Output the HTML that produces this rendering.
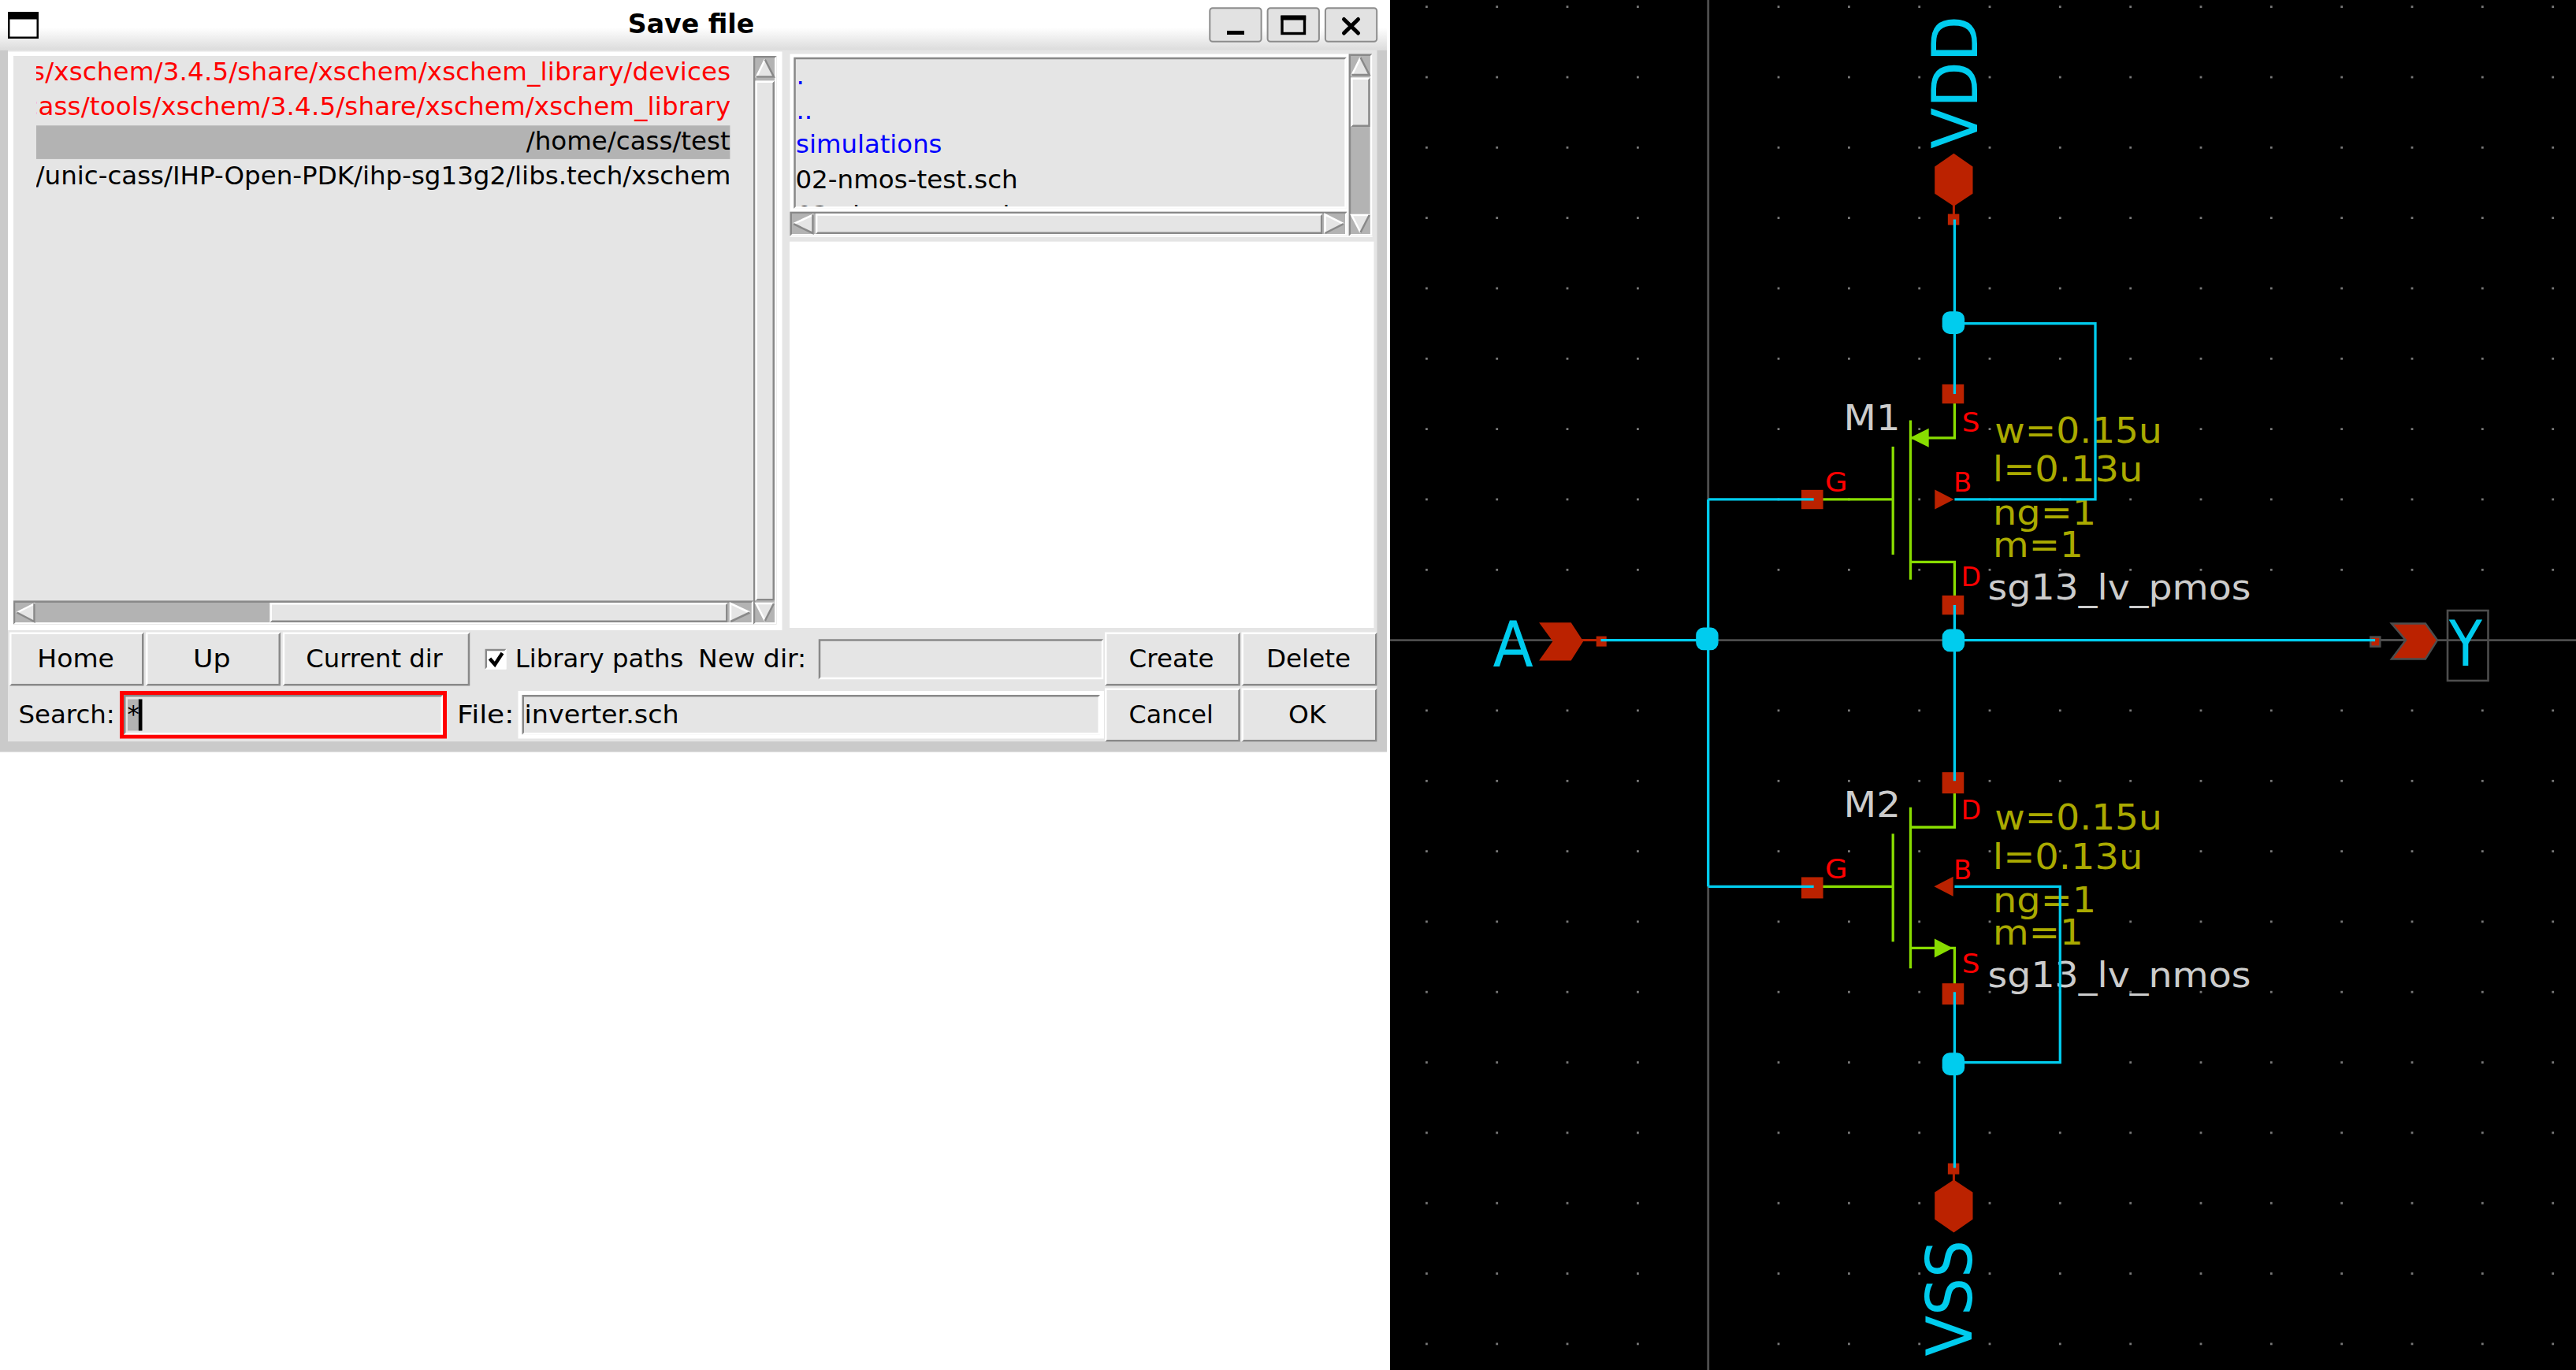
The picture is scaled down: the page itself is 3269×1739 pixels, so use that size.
<!DOCTYPE html>
<html><head><meta charset="utf-8"><title>Save file</title>
<style>
html,body{margin:0;padding:0;background:#fff;}
body{width:3269px;height:1739px;overflow:hidden;}
svg{display:block;font-family:"DejaVu Sans","Liberation Sans",sans-serif;}
</style></head><body>
<svg width="3269" height="1739" viewBox="0 0 3269 1739">
<defs>
<linearGradient id="tb" x1="0" y1="0" x2="0" y2="1"><stop offset="0" stop-color="#fff"/><stop offset="0.55" stop-color="#fff"/><stop offset="1" stop-color="#dcdcdc"/></linearGradient>
<clipPath id="cl1"><rect x="46" y="71" width="880.5" height="691"/></clipPath>
<clipPath id="cl2"><rect x="1009.5" y="76" width="696" height="186"/></clipPath>
</defs>
<g>
<rect x="-30" y="-30" width="3329" height="1799" fill="#fff"/>

<rect x="1764.00" y="-30.00" width="1535.00" height="1799.00" fill="#000" />
<g fill="#787878">
<rect x="1809.0" y="7.2" width="2.8" height="2.8"/>
<rect x="1809.0" y="96.6" width="2.8" height="2.8"/>
<rect x="1809.0" y="185.9" width="2.8" height="2.8"/>
<rect x="1809.0" y="275.2" width="2.8" height="2.8"/>
<rect x="1809.0" y="364.6" width="2.8" height="2.8"/>
<rect x="1809.0" y="453.9" width="2.8" height="2.8"/>
<rect x="1809.0" y="543.2" width="2.8" height="2.8"/>
<rect x="1809.0" y="632.5" width="2.8" height="2.8"/>
<rect x="1809.0" y="721.9" width="2.8" height="2.8"/>
<rect x="1809.0" y="900.5" width="2.8" height="2.8"/>
<rect x="1809.0" y="989.9" width="2.8" height="2.8"/>
<rect x="1809.0" y="1079.2" width="2.8" height="2.8"/>
<rect x="1809.0" y="1168.5" width="2.8" height="2.8"/>
<rect x="1809.0" y="1257.8" width="2.8" height="2.8"/>
<rect x="1809.0" y="1347.2" width="2.8" height="2.8"/>
<rect x="1809.0" y="1436.5" width="2.8" height="2.8"/>
<rect x="1809.0" y="1525.8" width="2.8" height="2.8"/>
<rect x="1809.0" y="1615.2" width="2.8" height="2.8"/>
<rect x="1809.0" y="1704.5" width="2.8" height="2.8"/>
<rect x="1898.3" y="7.2" width="2.8" height="2.8"/>
<rect x="1898.3" y="96.6" width="2.8" height="2.8"/>
<rect x="1898.3" y="185.9" width="2.8" height="2.8"/>
<rect x="1898.3" y="275.2" width="2.8" height="2.8"/>
<rect x="1898.3" y="364.6" width="2.8" height="2.8"/>
<rect x="1898.3" y="453.9" width="2.8" height="2.8"/>
<rect x="1898.3" y="543.2" width="2.8" height="2.8"/>
<rect x="1898.3" y="632.5" width="2.8" height="2.8"/>
<rect x="1898.3" y="721.9" width="2.8" height="2.8"/>
<rect x="1898.3" y="900.5" width="2.8" height="2.8"/>
<rect x="1898.3" y="989.9" width="2.8" height="2.8"/>
<rect x="1898.3" y="1079.2" width="2.8" height="2.8"/>
<rect x="1898.3" y="1168.5" width="2.8" height="2.8"/>
<rect x="1898.3" y="1257.8" width="2.8" height="2.8"/>
<rect x="1898.3" y="1347.2" width="2.8" height="2.8"/>
<rect x="1898.3" y="1436.5" width="2.8" height="2.8"/>
<rect x="1898.3" y="1525.8" width="2.8" height="2.8"/>
<rect x="1898.3" y="1615.2" width="2.8" height="2.8"/>
<rect x="1898.3" y="1704.5" width="2.8" height="2.8"/>
<rect x="1987.6" y="7.2" width="2.8" height="2.8"/>
<rect x="1987.6" y="96.6" width="2.8" height="2.8"/>
<rect x="1987.6" y="185.9" width="2.8" height="2.8"/>
<rect x="1987.6" y="275.2" width="2.8" height="2.8"/>
<rect x="1987.6" y="364.6" width="2.8" height="2.8"/>
<rect x="1987.6" y="453.9" width="2.8" height="2.8"/>
<rect x="1987.6" y="543.2" width="2.8" height="2.8"/>
<rect x="1987.6" y="632.5" width="2.8" height="2.8"/>
<rect x="1987.6" y="721.9" width="2.8" height="2.8"/>
<rect x="1987.6" y="900.5" width="2.8" height="2.8"/>
<rect x="1987.6" y="989.9" width="2.8" height="2.8"/>
<rect x="1987.6" y="1079.2" width="2.8" height="2.8"/>
<rect x="1987.6" y="1168.5" width="2.8" height="2.8"/>
<rect x="1987.6" y="1257.8" width="2.8" height="2.8"/>
<rect x="1987.6" y="1347.2" width="2.8" height="2.8"/>
<rect x="1987.6" y="1436.5" width="2.8" height="2.8"/>
<rect x="1987.6" y="1525.8" width="2.8" height="2.8"/>
<rect x="1987.6" y="1615.2" width="2.8" height="2.8"/>
<rect x="1987.6" y="1704.5" width="2.8" height="2.8"/>
<rect x="2077.0" y="7.2" width="2.8" height="2.8"/>
<rect x="2077.0" y="96.6" width="2.8" height="2.8"/>
<rect x="2077.0" y="185.9" width="2.8" height="2.8"/>
<rect x="2077.0" y="275.2" width="2.8" height="2.8"/>
<rect x="2077.0" y="364.6" width="2.8" height="2.8"/>
<rect x="2077.0" y="453.9" width="2.8" height="2.8"/>
<rect x="2077.0" y="543.2" width="2.8" height="2.8"/>
<rect x="2077.0" y="632.5" width="2.8" height="2.8"/>
<rect x="2077.0" y="721.9" width="2.8" height="2.8"/>
<rect x="2077.0" y="900.5" width="2.8" height="2.8"/>
<rect x="2077.0" y="989.9" width="2.8" height="2.8"/>
<rect x="2077.0" y="1079.2" width="2.8" height="2.8"/>
<rect x="2077.0" y="1168.5" width="2.8" height="2.8"/>
<rect x="2077.0" y="1257.8" width="2.8" height="2.8"/>
<rect x="2077.0" y="1347.2" width="2.8" height="2.8"/>
<rect x="2077.0" y="1436.5" width="2.8" height="2.8"/>
<rect x="2077.0" y="1525.8" width="2.8" height="2.8"/>
<rect x="2077.0" y="1615.2" width="2.8" height="2.8"/>
<rect x="2077.0" y="1704.5" width="2.8" height="2.8"/>
<rect x="2255.6" y="7.2" width="2.8" height="2.8"/>
<rect x="2255.6" y="96.6" width="2.8" height="2.8"/>
<rect x="2255.6" y="185.9" width="2.8" height="2.8"/>
<rect x="2255.6" y="275.2" width="2.8" height="2.8"/>
<rect x="2255.6" y="364.6" width="2.8" height="2.8"/>
<rect x="2255.6" y="453.9" width="2.8" height="2.8"/>
<rect x="2255.6" y="543.2" width="2.8" height="2.8"/>
<rect x="2255.6" y="632.5" width="2.8" height="2.8"/>
<rect x="2255.6" y="721.9" width="2.8" height="2.8"/>
<rect x="2255.6" y="900.5" width="2.8" height="2.8"/>
<rect x="2255.6" y="989.9" width="2.8" height="2.8"/>
<rect x="2255.6" y="1079.2" width="2.8" height="2.8"/>
<rect x="2255.6" y="1168.5" width="2.8" height="2.8"/>
<rect x="2255.6" y="1257.8" width="2.8" height="2.8"/>
<rect x="2255.6" y="1347.2" width="2.8" height="2.8"/>
<rect x="2255.6" y="1436.5" width="2.8" height="2.8"/>
<rect x="2255.6" y="1525.8" width="2.8" height="2.8"/>
<rect x="2255.6" y="1615.2" width="2.8" height="2.8"/>
<rect x="2255.6" y="1704.5" width="2.8" height="2.8"/>
<rect x="2345.0" y="7.2" width="2.8" height="2.8"/>
<rect x="2345.0" y="96.6" width="2.8" height="2.8"/>
<rect x="2345.0" y="185.9" width="2.8" height="2.8"/>
<rect x="2345.0" y="275.2" width="2.8" height="2.8"/>
<rect x="2345.0" y="364.6" width="2.8" height="2.8"/>
<rect x="2345.0" y="453.9" width="2.8" height="2.8"/>
<rect x="2345.0" y="543.2" width="2.8" height="2.8"/>
<rect x="2345.0" y="632.5" width="2.8" height="2.8"/>
<rect x="2345.0" y="721.9" width="2.8" height="2.8"/>
<rect x="2345.0" y="900.5" width="2.8" height="2.8"/>
<rect x="2345.0" y="989.9" width="2.8" height="2.8"/>
<rect x="2345.0" y="1079.2" width="2.8" height="2.8"/>
<rect x="2345.0" y="1168.5" width="2.8" height="2.8"/>
<rect x="2345.0" y="1257.8" width="2.8" height="2.8"/>
<rect x="2345.0" y="1347.2" width="2.8" height="2.8"/>
<rect x="2345.0" y="1436.5" width="2.8" height="2.8"/>
<rect x="2345.0" y="1525.8" width="2.8" height="2.8"/>
<rect x="2345.0" y="1615.2" width="2.8" height="2.8"/>
<rect x="2345.0" y="1704.5" width="2.8" height="2.8"/>
<rect x="2434.3" y="7.2" width="2.8" height="2.8"/>
<rect x="2434.3" y="96.6" width="2.8" height="2.8"/>
<rect x="2434.3" y="185.9" width="2.8" height="2.8"/>
<rect x="2434.3" y="275.2" width="2.8" height="2.8"/>
<rect x="2434.3" y="364.6" width="2.8" height="2.8"/>
<rect x="2434.3" y="453.9" width="2.8" height="2.8"/>
<rect x="2434.3" y="543.2" width="2.8" height="2.8"/>
<rect x="2434.3" y="632.5" width="2.8" height="2.8"/>
<rect x="2434.3" y="721.9" width="2.8" height="2.8"/>
<rect x="2434.3" y="900.5" width="2.8" height="2.8"/>
<rect x="2434.3" y="989.9" width="2.8" height="2.8"/>
<rect x="2434.3" y="1079.2" width="2.8" height="2.8"/>
<rect x="2434.3" y="1168.5" width="2.8" height="2.8"/>
<rect x="2434.3" y="1257.8" width="2.8" height="2.8"/>
<rect x="2434.3" y="1347.2" width="2.8" height="2.8"/>
<rect x="2434.3" y="1436.5" width="2.8" height="2.8"/>
<rect x="2434.3" y="1525.8" width="2.8" height="2.8"/>
<rect x="2434.3" y="1615.2" width="2.8" height="2.8"/>
<rect x="2434.3" y="1704.5" width="2.8" height="2.8"/>
<rect x="2523.6" y="7.2" width="2.8" height="2.8"/>
<rect x="2523.6" y="96.6" width="2.8" height="2.8"/>
<rect x="2523.6" y="185.9" width="2.8" height="2.8"/>
<rect x="2523.6" y="275.2" width="2.8" height="2.8"/>
<rect x="2523.6" y="364.6" width="2.8" height="2.8"/>
<rect x="2523.6" y="453.9" width="2.8" height="2.8"/>
<rect x="2523.6" y="543.2" width="2.8" height="2.8"/>
<rect x="2523.6" y="632.5" width="2.8" height="2.8"/>
<rect x="2523.6" y="721.9" width="2.8" height="2.8"/>
<rect x="2523.6" y="900.5" width="2.8" height="2.8"/>
<rect x="2523.6" y="989.9" width="2.8" height="2.8"/>
<rect x="2523.6" y="1079.2" width="2.8" height="2.8"/>
<rect x="2523.6" y="1168.5" width="2.8" height="2.8"/>
<rect x="2523.6" y="1257.8" width="2.8" height="2.8"/>
<rect x="2523.6" y="1347.2" width="2.8" height="2.8"/>
<rect x="2523.6" y="1436.5" width="2.8" height="2.8"/>
<rect x="2523.6" y="1525.8" width="2.8" height="2.8"/>
<rect x="2523.6" y="1615.2" width="2.8" height="2.8"/>
<rect x="2523.6" y="1704.5" width="2.8" height="2.8"/>
<rect x="2612.9" y="7.2" width="2.8" height="2.8"/>
<rect x="2612.9" y="96.6" width="2.8" height="2.8"/>
<rect x="2612.9" y="185.9" width="2.8" height="2.8"/>
<rect x="2612.9" y="275.2" width="2.8" height="2.8"/>
<rect x="2612.9" y="364.6" width="2.8" height="2.8"/>
<rect x="2612.9" y="453.9" width="2.8" height="2.8"/>
<rect x="2612.9" y="543.2" width="2.8" height="2.8"/>
<rect x="2612.9" y="632.5" width="2.8" height="2.8"/>
<rect x="2612.9" y="721.9" width="2.8" height="2.8"/>
<rect x="2612.9" y="900.5" width="2.8" height="2.8"/>
<rect x="2612.9" y="989.9" width="2.8" height="2.8"/>
<rect x="2612.9" y="1079.2" width="2.8" height="2.8"/>
<rect x="2612.9" y="1168.5" width="2.8" height="2.8"/>
<rect x="2612.9" y="1257.8" width="2.8" height="2.8"/>
<rect x="2612.9" y="1347.2" width="2.8" height="2.8"/>
<rect x="2612.9" y="1436.5" width="2.8" height="2.8"/>
<rect x="2612.9" y="1525.8" width="2.8" height="2.8"/>
<rect x="2612.9" y="1615.2" width="2.8" height="2.8"/>
<rect x="2612.9" y="1704.5" width="2.8" height="2.8"/>
<rect x="2702.3" y="7.2" width="2.8" height="2.8"/>
<rect x="2702.3" y="96.6" width="2.8" height="2.8"/>
<rect x="2702.3" y="185.9" width="2.8" height="2.8"/>
<rect x="2702.3" y="275.2" width="2.8" height="2.8"/>
<rect x="2702.3" y="364.6" width="2.8" height="2.8"/>
<rect x="2702.3" y="453.9" width="2.8" height="2.8"/>
<rect x="2702.3" y="543.2" width="2.8" height="2.8"/>
<rect x="2702.3" y="632.5" width="2.8" height="2.8"/>
<rect x="2702.3" y="721.9" width="2.8" height="2.8"/>
<rect x="2702.3" y="900.5" width="2.8" height="2.8"/>
<rect x="2702.3" y="989.9" width="2.8" height="2.8"/>
<rect x="2702.3" y="1079.2" width="2.8" height="2.8"/>
<rect x="2702.3" y="1168.5" width="2.8" height="2.8"/>
<rect x="2702.3" y="1257.8" width="2.8" height="2.8"/>
<rect x="2702.3" y="1347.2" width="2.8" height="2.8"/>
<rect x="2702.3" y="1436.5" width="2.8" height="2.8"/>
<rect x="2702.3" y="1525.8" width="2.8" height="2.8"/>
<rect x="2702.3" y="1615.2" width="2.8" height="2.8"/>
<rect x="2702.3" y="1704.5" width="2.8" height="2.8"/>
<rect x="2791.6" y="7.2" width="2.8" height="2.8"/>
<rect x="2791.6" y="96.6" width="2.8" height="2.8"/>
<rect x="2791.6" y="185.9" width="2.8" height="2.8"/>
<rect x="2791.6" y="275.2" width="2.8" height="2.8"/>
<rect x="2791.6" y="364.6" width="2.8" height="2.8"/>
<rect x="2791.6" y="453.9" width="2.8" height="2.8"/>
<rect x="2791.6" y="543.2" width="2.8" height="2.8"/>
<rect x="2791.6" y="632.5" width="2.8" height="2.8"/>
<rect x="2791.6" y="721.9" width="2.8" height="2.8"/>
<rect x="2791.6" y="900.5" width="2.8" height="2.8"/>
<rect x="2791.6" y="989.9" width="2.8" height="2.8"/>
<rect x="2791.6" y="1079.2" width="2.8" height="2.8"/>
<rect x="2791.6" y="1168.5" width="2.8" height="2.8"/>
<rect x="2791.6" y="1257.8" width="2.8" height="2.8"/>
<rect x="2791.6" y="1347.2" width="2.8" height="2.8"/>
<rect x="2791.6" y="1436.5" width="2.8" height="2.8"/>
<rect x="2791.6" y="1525.8" width="2.8" height="2.8"/>
<rect x="2791.6" y="1615.2" width="2.8" height="2.8"/>
<rect x="2791.6" y="1704.5" width="2.8" height="2.8"/>
<rect x="2880.9" y="7.2" width="2.8" height="2.8"/>
<rect x="2880.9" y="96.6" width="2.8" height="2.8"/>
<rect x="2880.9" y="185.9" width="2.8" height="2.8"/>
<rect x="2880.9" y="275.2" width="2.8" height="2.8"/>
<rect x="2880.9" y="364.6" width="2.8" height="2.8"/>
<rect x="2880.9" y="453.9" width="2.8" height="2.8"/>
<rect x="2880.9" y="543.2" width="2.8" height="2.8"/>
<rect x="2880.9" y="632.5" width="2.8" height="2.8"/>
<rect x="2880.9" y="721.9" width="2.8" height="2.8"/>
<rect x="2880.9" y="900.5" width="2.8" height="2.8"/>
<rect x="2880.9" y="989.9" width="2.8" height="2.8"/>
<rect x="2880.9" y="1079.2" width="2.8" height="2.8"/>
<rect x="2880.9" y="1168.5" width="2.8" height="2.8"/>
<rect x="2880.9" y="1257.8" width="2.8" height="2.8"/>
<rect x="2880.9" y="1347.2" width="2.8" height="2.8"/>
<rect x="2880.9" y="1436.5" width="2.8" height="2.8"/>
<rect x="2880.9" y="1525.8" width="2.8" height="2.8"/>
<rect x="2880.9" y="1615.2" width="2.8" height="2.8"/>
<rect x="2880.9" y="1704.5" width="2.8" height="2.8"/>
<rect x="2970.3" y="7.2" width="2.8" height="2.8"/>
<rect x="2970.3" y="96.6" width="2.8" height="2.8"/>
<rect x="2970.3" y="185.9" width="2.8" height="2.8"/>
<rect x="2970.3" y="275.2" width="2.8" height="2.8"/>
<rect x="2970.3" y="364.6" width="2.8" height="2.8"/>
<rect x="2970.3" y="453.9" width="2.8" height="2.8"/>
<rect x="2970.3" y="543.2" width="2.8" height="2.8"/>
<rect x="2970.3" y="632.5" width="2.8" height="2.8"/>
<rect x="2970.3" y="721.9" width="2.8" height="2.8"/>
<rect x="2970.3" y="900.5" width="2.8" height="2.8"/>
<rect x="2970.3" y="989.9" width="2.8" height="2.8"/>
<rect x="2970.3" y="1079.2" width="2.8" height="2.8"/>
<rect x="2970.3" y="1168.5" width="2.8" height="2.8"/>
<rect x="2970.3" y="1257.8" width="2.8" height="2.8"/>
<rect x="2970.3" y="1347.2" width="2.8" height="2.8"/>
<rect x="2970.3" y="1436.5" width="2.8" height="2.8"/>
<rect x="2970.3" y="1525.8" width="2.8" height="2.8"/>
<rect x="2970.3" y="1615.2" width="2.8" height="2.8"/>
<rect x="2970.3" y="1704.5" width="2.8" height="2.8"/>
<rect x="3059.6" y="7.2" width="2.8" height="2.8"/>
<rect x="3059.6" y="96.6" width="2.8" height="2.8"/>
<rect x="3059.6" y="185.9" width="2.8" height="2.8"/>
<rect x="3059.6" y="275.2" width="2.8" height="2.8"/>
<rect x="3059.6" y="364.6" width="2.8" height="2.8"/>
<rect x="3059.6" y="453.9" width="2.8" height="2.8"/>
<rect x="3059.6" y="543.2" width="2.8" height="2.8"/>
<rect x="3059.6" y="632.5" width="2.8" height="2.8"/>
<rect x="3059.6" y="721.9" width="2.8" height="2.8"/>
<rect x="3059.6" y="900.5" width="2.8" height="2.8"/>
<rect x="3059.6" y="989.9" width="2.8" height="2.8"/>
<rect x="3059.6" y="1079.2" width="2.8" height="2.8"/>
<rect x="3059.6" y="1168.5" width="2.8" height="2.8"/>
<rect x="3059.6" y="1257.8" width="2.8" height="2.8"/>
<rect x="3059.6" y="1347.2" width="2.8" height="2.8"/>
<rect x="3059.6" y="1436.5" width="2.8" height="2.8"/>
<rect x="3059.6" y="1525.8" width="2.8" height="2.8"/>
<rect x="3059.6" y="1615.2" width="2.8" height="2.8"/>
<rect x="3059.6" y="1704.5" width="2.8" height="2.8"/>
<rect x="3148.9" y="7.2" width="2.8" height="2.8"/>
<rect x="3148.9" y="96.6" width="2.8" height="2.8"/>
<rect x="3148.9" y="185.9" width="2.8" height="2.8"/>
<rect x="3148.9" y="275.2" width="2.8" height="2.8"/>
<rect x="3148.9" y="364.6" width="2.8" height="2.8"/>
<rect x="3148.9" y="453.9" width="2.8" height="2.8"/>
<rect x="3148.9" y="543.2" width="2.8" height="2.8"/>
<rect x="3148.9" y="632.5" width="2.8" height="2.8"/>
<rect x="3148.9" y="721.9" width="2.8" height="2.8"/>
<rect x="3148.9" y="900.5" width="2.8" height="2.8"/>
<rect x="3148.9" y="989.9" width="2.8" height="2.8"/>
<rect x="3148.9" y="1079.2" width="2.8" height="2.8"/>
<rect x="3148.9" y="1168.5" width="2.8" height="2.8"/>
<rect x="3148.9" y="1257.8" width="2.8" height="2.8"/>
<rect x="3148.9" y="1347.2" width="2.8" height="2.8"/>
<rect x="3148.9" y="1436.5" width="2.8" height="2.8"/>
<rect x="3148.9" y="1525.8" width="2.8" height="2.8"/>
<rect x="3148.9" y="1615.2" width="2.8" height="2.8"/>
<rect x="3148.9" y="1704.5" width="2.8" height="2.8"/>
<rect x="3238.3" y="7.2" width="2.8" height="2.8"/>
<rect x="3238.3" y="96.6" width="2.8" height="2.8"/>
<rect x="3238.3" y="185.9" width="2.8" height="2.8"/>
<rect x="3238.3" y="275.2" width="2.8" height="2.8"/>
<rect x="3238.3" y="364.6" width="2.8" height="2.8"/>
<rect x="3238.3" y="453.9" width="2.8" height="2.8"/>
<rect x="3238.3" y="543.2" width="2.8" height="2.8"/>
<rect x="3238.3" y="632.5" width="2.8" height="2.8"/>
<rect x="3238.3" y="721.9" width="2.8" height="2.8"/>
<rect x="3238.3" y="900.5" width="2.8" height="2.8"/>
<rect x="3238.3" y="989.9" width="2.8" height="2.8"/>
<rect x="3238.3" y="1079.2" width="2.8" height="2.8"/>
<rect x="3238.3" y="1168.5" width="2.8" height="2.8"/>
<rect x="3238.3" y="1257.8" width="2.8" height="2.8"/>
<rect x="3238.3" y="1347.2" width="2.8" height="2.8"/>
<rect x="3238.3" y="1436.5" width="2.8" height="2.8"/>
<rect x="3238.3" y="1525.8" width="2.8" height="2.8"/>
<rect x="3238.3" y="1615.2" width="2.8" height="2.8"/>
<rect x="3238.3" y="1704.5" width="2.8" height="2.8"/>
</g>
<g stroke="#4d4d4d" stroke-width="2.9" fill="none">
<line x1="2167.7" y1="-30" x2="2167.7" y2="1769"/><line x1="1764" y1="812.6" x2="3299" y2="812.6"/>
</g>
<polyline points="2301.7,633.9 2402.2,633.9" fill="none" stroke="#88dd00" stroke-width="3.3" />
<polyline points="2402.2,566.9 2402.2,704.1" fill="none" stroke="#88dd00" stroke-width="3.3" />
<polyline points="2424.5,533.4 2424.5,735.8" fill="none" stroke="#88dd00" stroke-width="3.3" />
<polyline points="2424.5,555.8 2480.4,555.8 2480.4,499.9" fill="none" stroke="#88dd00" stroke-width="3.3" />
<polyline points="2424.5,713.4 2480.4,713.4 2480.4,767.9" fill="none" stroke="#88dd00" stroke-width="3.3" />
<polygon points="2423.6,555.8 2447.7,543.7 2447.7,567.8" fill="#88dd00" />
<polygon points="2479.5,633.9 2455.3,621.4 2455.3,646.4" fill="#bb2200" />
<rect x="2285.99" y="621.84" width="27.60" height="24.40" fill="#bb2200" />
<rect x="2464.65" y="487.85" width="27.60" height="24.40" fill="#bb2200" />
<rect x="2464.65" y="755.84" width="27.60" height="24.40" fill="#bb2200" />
<text x="2339.54" y="545.94" font-size="45" fill="#cccccc" textLength="71.98" lengthAdjust="spacingAndGlyphs">M1</text>
<text x="2489.70" y="548.34" font-size="33.5" fill="#ff0000" textLength="22.68" lengthAdjust="spacingAndGlyphs">S</text>
<text x="2488.82" y="744.24" font-size="33.5" fill="#ff0000" textLength="25.29" lengthAdjust="spacingAndGlyphs">D</text>
<text x="2315.90" y="624.04" font-size="33.5" fill="#ff0000" textLength="28.57" lengthAdjust="spacingAndGlyphs">G</text>
<text x="2478.93" y="624.34" font-size="33.5" fill="#ff0000" textLength="23.20" lengthAdjust="spacingAndGlyphs">B</text>
<text x="2531.32" y="562.04" font-size="45" fill="#aaaa00" textLength="212.59" lengthAdjust="spacingAndGlyphs">w=0.15u</text>
<text x="2528.89" y="611.24" font-size="45" fill="#aaaa00" textLength="190.60" lengthAdjust="spacingAndGlyphs">l=0.13u</text>
<text x="2529.02" y="666.24" font-size="45" fill="#aaaa00" textLength="131.11" lengthAdjust="spacingAndGlyphs">ng=1</text>
<text x="2529.11" y="707.24" font-size="45" fill="#aaaa00" textLength="114.56" lengthAdjust="spacingAndGlyphs">m=1</text>
<text x="2522.64" y="761.44" font-size="45" fill="#cccccc" textLength="333.85" lengthAdjust="spacingAndGlyphs">sg13_lv_pmos</text>
<polyline points="2301.7,1125.3 2402.2,1125.3" fill="none" stroke="#88dd00" stroke-width="3.3" />
<polyline points="2402.2,1058.3 2402.2,1195.4" fill="none" stroke="#88dd00" stroke-width="3.3" />
<polyline points="2424.5,1024.8 2424.5,1229.3" fill="none" stroke="#88dd00" stroke-width="3.3" />
<polyline points="2424.5,1050.0 2480.4,1050.0 2480.4,991.3" fill="none" stroke="#88dd00" stroke-width="3.3" />
<polyline points="2424.5,1203.4 2480.4,1203.4 2480.4,1259.2" fill="none" stroke="#88dd00" stroke-width="3.3" />
<polygon points="2478.1,1203.4 2454.9,1191.4 2454.9,1215.5" fill="#88dd00" />
<polygon points="2454.4,1125.3 2478.6,1112.7 2478.6,1137.8" fill="#bb2200" />
<rect x="2285.99" y="1113.42" width="27.60" height="27.00" fill="#bb2200" />
<rect x="2464.65" y="980.18" width="27.60" height="27.00" fill="#bb2200" />
<rect x="2464.65" y="1248.17" width="27.60" height="27.00" fill="#bb2200" />
<text x="2339.52" y="1037.26" font-size="45" fill="#cccccc" textLength="72.39" lengthAdjust="spacingAndGlyphs">M2</text>
<text x="2488.82" y="1040.16" font-size="33.5" fill="#ff0000" textLength="25.29" lengthAdjust="spacingAndGlyphs">D</text>
<text x="2489.70" y="1234.86" font-size="33.5" fill="#ff0000" textLength="22.68" lengthAdjust="spacingAndGlyphs">S</text>
<text x="2315.90" y="1115.36" font-size="33.5" fill="#ff0000" textLength="28.57" lengthAdjust="spacingAndGlyphs">G</text>
<text x="2478.93" y="1115.66" font-size="33.5" fill="#ff0000" textLength="23.20" lengthAdjust="spacingAndGlyphs">B</text>
<text x="2531.32" y="1053.36" font-size="45" fill="#aaaa00" textLength="212.59" lengthAdjust="spacingAndGlyphs">w=0.15u</text>
<text x="2528.89" y="1102.56" font-size="45" fill="#aaaa00" textLength="190.60" lengthAdjust="spacingAndGlyphs">l=0.13u</text>
<text x="2529.02" y="1157.56" font-size="45" fill="#aaaa00" textLength="131.11" lengthAdjust="spacingAndGlyphs">ng=1</text>
<text x="2529.11" y="1198.56" font-size="45" fill="#aaaa00" textLength="114.56" lengthAdjust="spacingAndGlyphs">m=1</text>
<text x="2522.64" y="1252.76" font-size="45" fill="#cccccc" textLength="333.80" lengthAdjust="spacingAndGlyphs">sg13_lv_nmos</text>
<polygon points="1953.1,790.3 1993.7,790.3 2009.2,814.1 1993.7,838.6 1953.1,838.6 1970.4,814.1" fill="#bb2200"/>
<line x1="2007.7" y1="812.6" x2="2033.7" y2="812.6" stroke="#bb2200" stroke-width="3"/>
<rect x="2025.70" y="807.60" width="13.00" height="13.00" fill="#bb2200" />
<text x="1894.54" y="845.70" font-size="80" fill="#00ccee" textLength="51.24" lengthAdjust="spacingAndGlyphs">A</text>
<line x1="3016.3" y1="812.6" x2="3056.3" y2="812.6" stroke="#4d4d4d" stroke-width="3"/>
<polygon points="3035.0,791.6 3077.9,791.6 3093.0,812.6 3077.9,836.6 3035.0,836.6 3052.9,812.6" fill="#bb2200" stroke="#4d4d4d" stroke-width="2.5"/>
<rect x="3008.34" y="808.60" width="12.00" height="12.00" fill="#bb2200" stroke="#4d4d4d" stroke-width="2.5"/>
<rect x="3106" y="775" width="51.5" height="89" fill="none" stroke="#4d4d4d" stroke-width="2.6"/>
<text x="3107.77" y="844.60" font-size="80" fill="#00ccee" textLength="42.21" lengthAdjust="spacingAndGlyphs">Y</text>
<polygon points="2479.4,261.7 2455.2,245.8 2455.2,211.4 2479.4,194.7 2503.5,211.4 2503.5,245.8" fill="#bb2200"/>
<line x1="2479.4" y1="276.6" x2="2479.4" y2="258.8" stroke="#bb2200" stroke-width="3"/>
<rect x="2471.85" y="271.62" width="14.50" height="14.00" fill="#bb2200" />
<polygon points="2479.4,1497.4 2455.2,1513.4 2455.2,1547.8 2479.4,1564.4 2503.5,1547.8 2503.5,1513.4" fill="#bb2200"/>
<line x1="2479.4" y1="1482.6" x2="2479.4" y2="1500.4" stroke="#bb2200" stroke-width="3"/>
<rect x="2471.85" y="1476.58" width="14.50" height="14.00" fill="#bb2200" />
<text transform="translate(2509.30,188.77) rotate(-90)" font-size="80" fill="#00ccee" textLength="168.77" lengthAdjust="spacingAndGlyphs">VDD</text>
<text transform="translate(2501.60,1721.57) rotate(-90)" font-size="80" fill="#00ccee" textLength="147.62" lengthAdjust="spacingAndGlyphs">VSS</text>
<polyline points="2480.4,278.4 2480.4,499.9" fill="none" stroke="#00ccee" stroke-width="3.3" />
<polyline points="2480.4,410.6 2659.0,410.6 2659.0,633.9 2480.4,633.9" fill="none" stroke="#00ccee" stroke-width="3.3" />
<polyline points="2480.4,767.9 2480.4,991.3" fill="none" stroke="#00ccee" stroke-width="3.3" />
<polyline points="2480.4,812.6 3014.1,812.6" fill="none" stroke="#00ccee" stroke-width="3.3" />
<polyline points="2031.5,812.6 2167.7,812.6" fill="none" stroke="#00ccee" stroke-width="3.3" />
<polyline points="2167.7,633.9 2167.7,1125.3" fill="none" stroke="#00ccee" stroke-width="3.3" />
<polyline points="2167.7,633.9 2301.7,633.9" fill="none" stroke="#00ccee" stroke-width="3.3" />
<polyline points="2167.7,1125.3 2301.7,1125.3" fill="none" stroke="#00ccee" stroke-width="3.3" />
<polyline points="2480.4,1259.2 2480.4,1482.6" fill="none" stroke="#00ccee" stroke-width="3.3" />
<polyline points="2480.4,1348.6 2614.3,1348.6 2614.3,1125.3 2480.4,1125.3" fill="none" stroke="#00ccee" stroke-width="3.3" />
<rect x="2464.7" y="395.3" width="28.4" height="28.6" rx="9.5" fill="#00ccee"/>
<rect x="2464.7" y="798.6" width="28.4" height="28.6" rx="9.5" fill="#00ccee"/>
<rect x="2152.2" y="796.6" width="28.4" height="28.6" rx="9.5" fill="#00ccee"/>
<rect x="2464.7" y="1336.3" width="28.4" height="28.6" rx="9.5" fill="#00ccee"/>
<rect x="-30.00" y="-30.00" width="1790.00" height="93.50" fill="#fff" />
<rect x="-30.00" y="0.00" width="1790.00" height="63.50" fill="url(#tb)" />
<rect x="-30.00" y="63.50" width="1790.00" height="891.00" fill="#cacaca" />
<rect x="10.00" y="63.50" width="1737.50" height="877.70" fill="#e5e5e5" />
<rect x="10.00" y="15.00" width="39.00" height="34.00" fill="#000" />
<rect x="12.50" y="24.50" width="34.00" height="22.00" fill="#fff" />
<text x="796.88" y="41.90" font-size="33" fill="#000" textLength="160.31" lengthAdjust="spacingAndGlyphs" font-weight="bold">Save file</text>
<rect x="1535.30" y="10.20" width="65.30" height="42.60" fill="#e2e2e2" rx="3.5" stroke="#8c8c8c" stroke-width="2"/>
<rect x="1608.60" y="10.20" width="65.30" height="42.60" fill="#e2e2e2" rx="3.5" stroke="#8c8c8c" stroke-width="2"/>
<rect x="1681.90" y="10.20" width="65.30" height="42.60" fill="#e2e2e2" rx="3.5" stroke="#8c8c8c" stroke-width="2"/>
<rect x="1557.00" y="39.00" width="22.00" height="5.00" fill="#000" />
<rect x="1627" y="21.5" width="28.5" height="21" fill="none" stroke="#000" stroke-width="3.4"/>
<rect x="1625.40" y="19.50" width="31.80" height="6.00" fill="#000" />
<path d="M1705.5,24.5 L1723.5,42 M1723.5,24.5 L1705.5,42" stroke="#000" stroke-width="5" stroke-linecap="round" fill="none"/>
<rect x="10.00" y="65.50" width="982.50" height="734.50" fill="#ffffff" />
<rect x="17.00" y="71.00" width="968.00" height="721.50" fill="#e5e5e5" />
<rect x="46.00" y="159.30" width="880.40" height="42.60" fill="#b3b3b3" />
<g clip-path="url(#cl1)">
<text x="927.30" y="102.00" font-size="32.5" fill="#ff0000" text-anchor="end" letter-spacing="0.17">/home/cass/unic-cass/tools/xschem/3.4.5/share/xschem/xschem_library/devices</text>
<text x="927.30" y="145.80" font-size="32.5" fill="#ff0000" text-anchor="end" letter-spacing="0.17">/home/cass/unic-cass/tools/xschem/3.4.5/share/xschem/xschem_library</text>
<text x="926.80" y="189.60" font-size="32.5" fill="#000" text-anchor="end" >/home/cass/test</text>
<text x="927.50" y="233.70" font-size="32.5" fill="#000" text-anchor="end" >/home/cass/unic-cass/IHP-Open-PDK/ihp-sg13g2/libs.tech/xschem</text>
</g>
<rect x="956.00" y="71.00" width="29.50" height="721.50" fill="#b3b3b3" />
<polygon points="956.00,792.50 985.50,792.50 985.50,71.00 983.00,73.50 983.00,790.00 958.50,790.00" fill="#ffffff"/>
<polygon points="956.00,792.50 956.00,71.00 985.50,71.00 983.00,73.50 958.50,73.50 958.50,790.00" fill="#898989"/>
<rect x="958.50" y="73.50" width="24.50" height="25.00" fill="#b3b3b3" />
<polygon points="970.8,74.5 983.0,98.5 958.5,98.5" fill="#e5e5e5"/>
<polyline points="959.5,98.5 970.8,75.5" stroke="#ffffff" stroke-width="2.5" fill="none"/>
<polyline points="970.8,75.5 982.0,97.5 959.5,97.5" stroke="#898989" stroke-width="2.5" fill="none"/>
<rect x="958.50" y="102.50" width="24.50" height="660.00" fill="#e5e5e5" />
<polygon points="958.50,762.50 983.00,762.50 983.00,102.50 980.50,105.00 980.50,760.00 961.00,760.00" fill="#898989"/>
<polygon points="958.50,762.50 958.50,102.50 983.00,102.50 980.50,105.00 961.00,105.00 961.00,760.00" fill="#ffffff"/>
<rect x="958.50" y="765.00" width="24.50" height="25.00" fill="#b3b3b3" />
<polygon points="958.5,765.0 983.0,765.0 970.8,789.0" fill="#e5e5e5"/>
<polyline points="970.8,788.0 959.5,766.0 982.0,766.0" stroke="#ffffff" stroke-width="2.5" fill="none"/>
<polyline points="982.0,766.0 970.8,788.0" stroke="#898989" stroke-width="2.5" fill="none"/>
<rect x="17.00" y="762.50" width="939.00" height="30.00" fill="#b3b3b3" />
<polygon points="17.00,792.50 956.00,792.50 956.00,762.50 953.50,765.00 953.50,790.00 19.50,790.00" fill="#ffffff"/>
<polygon points="17.00,792.50 17.00,762.50 956.00,762.50 953.50,765.00 19.50,765.00 19.50,790.00" fill="#898989"/>
<rect x="19.50" y="765.00" width="25.00" height="25.00" fill="#b3b3b3" />
<polygon points="20.5,777.5 44.5,765.0 44.5,790.0" fill="#e5e5e5"/>
<polyline points="44.5,766.0 21.5,777.5" stroke="#ffffff" stroke-width="2.5" fill="none"/>
<polyline points="21.5,777.5 43.5,789.0 43.5,766.0" stroke="#898989" stroke-width="2.5" fill="none"/>
<rect x="342.50" y="765.00" width="581.00" height="25.00" fill="#e5e5e5" />
<polygon points="342.50,790.00 923.50,790.00 923.50,765.00 921.00,767.50 921.00,787.50 345.00,787.50" fill="#898989"/>
<polygon points="342.50,790.00 342.50,765.00 923.50,765.00 921.00,767.50 345.00,767.50 345.00,787.50" fill="#ffffff"/>
<rect x="926.00" y="765.00" width="27.50" height="25.00" fill="#b3b3b3" />
<polygon points="926.0,765.0 952.5,777.5 926.0,790.0" fill="#e5e5e5"/>
<polyline points="927.0,789.0 927.0,766.0 951.5,777.5" stroke="#ffffff" stroke-width="2.5" fill="none"/>
<polyline points="951.5,777.5 927.0,789.0" stroke="#898989" stroke-width="2.5" fill="none"/>
<rect x="1002.50" y="68.50" width="739.00" height="232.50" fill="#ffffff" />
<rect x="1007.30" y="72.80" width="701.50" height="192.00" fill="#e5e5e5" />
<polygon points="1007.30,264.80 1708.80,264.80 1708.80,72.80 1706.30,75.30 1706.30,262.30 1009.80,262.30" fill="#ffffff"/>
<polygon points="1007.30,264.80 1007.30,72.80 1708.80,72.80 1706.30,75.30 1009.80,75.30 1009.80,262.30" fill="#898989"/>
<g clip-path="url(#cl2)">
<text x="1010.50" y="106.80" font-size="32.5" fill="#0000ff" text-anchor="start" >.</text>
<text x="1010.50" y="150.60" font-size="32.5" fill="#0000ff" text-anchor="start" >..</text>
<text x="1010.10" y="194.40" font-size="32.5" fill="#0000ff" textLength="185.38" lengthAdjust="spacingAndGlyphs">simulations</text>
<text x="1009.39" y="238.60" font-size="32.5" fill="#000" textLength="282.31" lengthAdjust="spacingAndGlyphs">02-nmos-test.sch</text>
<text x="1010.50" y="284.00" font-size="32.5" fill="#000" text-anchor="start" >03-vin-sweep.sch</text>
</g>
<rect x="1711.70" y="68.50" width="29.50" height="231.00" fill="#b3b3b3" />
<polygon points="1711.70,299.50 1741.20,299.50 1741.20,68.50 1738.70,71.00 1738.70,297.00 1714.20,297.00" fill="#ffffff"/>
<polygon points="1711.70,299.50 1711.70,68.50 1741.20,68.50 1738.70,71.00 1714.20,71.00 1714.20,297.00" fill="#898989"/>
<rect x="1714.20" y="71.00" width="24.50" height="25.00" fill="#b3b3b3" />
<polygon points="1726.5,72.0 1738.7,96.0 1714.2,96.0" fill="#e5e5e5"/>
<polyline points="1715.2,96.0 1726.5,73.0" stroke="#ffffff" stroke-width="2.5" fill="none"/>
<polyline points="1726.5,73.0 1737.7,95.0 1715.2,95.0" stroke="#898989" stroke-width="2.5" fill="none"/>
<rect x="1714.20" y="98.50" width="24.50" height="62.50" fill="#e5e5e5" />
<polygon points="1714.20,161.00 1738.70,161.00 1738.70,98.50 1736.20,101.00 1736.20,158.50 1716.70,158.50" fill="#898989"/>
<polygon points="1714.20,161.00 1714.20,98.50 1738.70,98.50 1736.20,101.00 1716.70,101.00 1716.70,158.50" fill="#ffffff"/>
<rect x="1714.20" y="272.00" width="24.50" height="25.00" fill="#b3b3b3" />
<polygon points="1714.2,272.0 1738.7,272.0 1726.5,296.0" fill="#e5e5e5"/>
<polyline points="1726.5,295.0 1715.2,273.0 1737.7,273.0" stroke="#ffffff" stroke-width="2.5" fill="none"/>
<polyline points="1737.7,273.0 1726.5,295.0" stroke="#898989" stroke-width="2.5" fill="none"/>
<rect x="1002.50" y="268.80" width="707.00" height="30.70" fill="#b3b3b3" />
<polygon points="1002.50,299.50 1709.50,299.50 1709.50,268.80 1707.00,271.30 1707.00,297.00 1005.00,297.00" fill="#ffffff"/>
<polygon points="1002.50,299.50 1002.50,268.80 1709.50,268.80 1707.00,271.30 1005.00,271.30 1005.00,297.00" fill="#898989"/>
<rect x="1005.00" y="271.30" width="27.50" height="25.70" fill="#b3b3b3" />
<polygon points="1006.0,284.2 1032.5,271.3 1032.5,297.0" fill="#e5e5e5"/>
<polyline points="1032.5,272.3 1007.0,284.2" stroke="#ffffff" stroke-width="2.5" fill="none"/>
<polyline points="1007.0,284.2 1031.5,296.0 1031.5,272.3" stroke="#898989" stroke-width="2.5" fill="none"/>
<rect x="1034.90" y="271.30" width="643.50" height="25.70" fill="#e5e5e5" />
<polygon points="1034.90,297.00 1678.40,297.00 1678.40,271.30 1675.90,273.80 1675.90,294.50 1037.40,294.50" fill="#898989"/>
<polygon points="1034.90,297.00 1034.90,271.30 1678.40,271.30 1675.90,273.80 1037.40,273.80 1037.40,294.50" fill="#ffffff"/>
<rect x="1680.50" y="271.30" width="26.50" height="25.70" fill="#b3b3b3" />
<polygon points="1680.5,271.3 1706.0,284.2 1680.5,297.0" fill="#e5e5e5"/>
<polyline points="1681.5,296.0 1681.5,272.3 1705.0,284.2" stroke="#ffffff" stroke-width="2.5" fill="none"/>
<polyline points="1705.0,284.2 1681.5,296.0" stroke="#898989" stroke-width="2.5" fill="none"/>
<rect x="1002.00" y="306.70" width="741.50" height="490.30" fill="#ffffff" />
<rect x="12.00" y="802.50" width="170.50" height="68.00" fill="#e5e5e5" />
<polygon points="12.00,870.50 182.50,870.50 182.50,802.50 180.00,805.00 180.00,868.00 14.50,868.00" fill="#898989"/>
<polygon points="12.00,870.50 12.00,802.50 182.50,802.50 180.00,805.00 14.50,805.00 14.50,868.00" fill="#ffffff"/>
<text x="47.38" y="847.20" font-size="32.5" fill="#000" textLength="97.53" lengthAdjust="spacingAndGlyphs">Home</text>
<rect x="185.00" y="802.50" width="171.00" height="68.00" fill="#e5e5e5" />
<polygon points="185.00,870.50 356.00,870.50 356.00,802.50 353.50,805.00 353.50,868.00 187.50,868.00" fill="#898989"/>
<polygon points="185.00,870.50 185.00,802.50 356.00,802.50 353.50,805.00 187.50,805.00 187.50,868.00" fill="#ffffff"/>
<text x="245.06" y="847.20" font-size="32.5" fill="#000" textLength="47.47" lengthAdjust="spacingAndGlyphs">Up</text>
<rect x="358.75" y="802.50" width="237.50" height="68.00" fill="#e5e5e5" />
<polygon points="358.75,870.50 596.25,870.50 596.25,802.50 593.75,805.00 593.75,868.00 361.25,868.00" fill="#898989"/>
<polygon points="358.75,870.50 358.75,802.50 596.25,802.50 593.75,805.00 361.25,805.00 361.25,868.00" fill="#ffffff"/>
<text x="388.33" y="847.20" font-size="32.5" fill="#000" textLength="173.49" lengthAdjust="spacingAndGlyphs">Current dir</text>
<rect x="1402.00" y="802.50" width="171.80" height="68.00" fill="#e5e5e5" />
<polygon points="1402.00,870.50 1573.80,870.50 1573.80,802.50 1571.30,805.00 1571.30,868.00 1404.50,868.00" fill="#898989"/>
<polygon points="1402.00,870.50 1402.00,802.50 1573.80,802.50 1571.30,805.00 1404.50,805.00 1404.50,868.00" fill="#ffffff"/>
<text x="1432.56" y="847.20" font-size="32.5" fill="#000" textLength="108.06" lengthAdjust="spacingAndGlyphs">Create</text>
<rect x="1575.50" y="802.50" width="172.00" height="68.00" fill="#e5e5e5" />
<polygon points="1575.50,870.50 1747.50,870.50 1747.50,802.50 1745.00,805.00 1745.00,868.00 1578.00,868.00" fill="#898989"/>
<polygon points="1575.50,870.50 1575.50,802.50 1747.50,802.50 1745.00,805.00 1578.00,805.00 1578.00,868.00" fill="#ffffff"/>
<text x="1606.92" y="847.20" font-size="32.5" fill="#000" textLength="107.22" lengthAdjust="spacingAndGlyphs">Delete</text>
<rect x="1402.00" y="873.50" width="171.80" height="68.00" fill="#e5e5e5" />
<polygon points="1402.00,941.50 1573.80,941.50 1573.80,873.50 1571.30,876.00 1571.30,939.00 1404.50,939.00" fill="#898989"/>
<polygon points="1402.00,941.50 1402.00,873.50 1573.80,873.50 1571.30,876.00 1404.50,876.00 1404.50,939.00" fill="#ffffff"/>
<text x="1432.61" y="918.20" font-size="32.5" fill="#000" textLength="107.23" lengthAdjust="spacingAndGlyphs">Cancel</text>
<rect x="1575.50" y="873.50" width="172.00" height="68.00" fill="#e5e5e5" />
<polygon points="1575.50,941.50 1747.50,941.50 1747.50,873.50 1745.00,876.00 1745.00,939.00 1578.00,939.00" fill="#898989"/>
<polygon points="1575.50,941.50 1575.50,873.50 1747.50,873.50 1745.00,876.00 1578.00,876.00 1578.00,939.00" fill="#ffffff"/>
<text x="1635.04" y="918.20" font-size="32.5" fill="#000" textLength="47.46" lengthAdjust="spacingAndGlyphs">OK</text>
<rect x="615.50" y="823.75" width="27.00" height="25.75" fill="#fff" />
<polygon points="615.50,849.50 642.50,849.50 642.50,823.75 640.00,826.25 640.00,847.00 618.00,847.00" fill="#ffffff"/>
<polygon points="615.50,849.50 615.50,823.75 642.50,823.75 640.00,826.25 618.00,826.25 618.00,847.00" fill="#898989"/>
<path d="M621.5,836 L628,843.5 L637.5,829" stroke="#000" stroke-width="4.5" fill="none"/>
<text x="653.70" y="847.00" font-size="32.5" fill="#000" textLength="213.53" lengthAdjust="spacingAndGlyphs">Library paths</text>
<text x="886.12" y="847.00" font-size="32.5" fill="#000" textLength="137.16" lengthAdjust="spacingAndGlyphs">New dir:</text>
<rect x="1038.75" y="811.25" width="361.50" height="51.00" fill="#e5e5e5" />
<polygon points="1038.75,862.25 1400.25,862.25 1400.25,811.25 1397.75,813.75 1397.75,859.75 1041.25,859.75" fill="#ffffff"/>
<polygon points="1038.75,862.25 1038.75,811.25 1400.25,811.25 1397.75,813.75 1041.25,813.75 1041.25,859.75" fill="#898989"/>
<text x="23.49" y="918.00" font-size="32.5" fill="#000" textLength="122.21" lengthAdjust="spacingAndGlyphs">Search:</text>
<rect x="152.00" y="877.00" width="415.00" height="60.50" fill="#ff0000" />
<rect x="157.00" y="882.00" width="405.00" height="50.50" fill="#e5e5e5" />
<polygon points="157.00,932.50 562.00,932.50 562.00,882.00 559.50,884.50 559.50,930.00 159.50,930.00" fill="#ffffff"/>
<polygon points="157.00,932.50 157.00,882.00 562.00,882.00 559.50,884.50 159.50,884.50 159.50,930.00" fill="#898989"/>
<rect x="162.00" y="887.50" width="13.50" height="40.00" fill="#b3b3b3" />
<text x="161.50" y="917.00" font-size="31" fill="#000" text-anchor="start" >*</text>
<rect x="175.75" y="887.50" width="4.75" height="40.00" fill="#000" />
<text x="580.09" y="918.00" font-size="32.5" fill="#000" textLength="72.29" lengthAdjust="spacingAndGlyphs">File:</text>
<rect x="657.50" y="877.00" width="743.50" height="60.50" fill="#ffffff" />
<rect x="662.50" y="882.00" width="733.50" height="50.50" fill="#e5e5e5" />
<polygon points="662.50,932.50 1396.00,932.50 1396.00,882.00 1393.50,884.50 1393.50,930.00 665.00,930.00" fill="#ffffff"/>
<polygon points="662.50,932.50 662.50,882.00 1396.00,882.00 1393.50,884.50 665.00,884.50 665.00,930.00" fill="#898989"/>
<text x="665.51" y="918.00" font-size="32.5" fill="#000" textLength="196.19" lengthAdjust="spacingAndGlyphs">inverter.sch</text>
</g></svg></body></html>
